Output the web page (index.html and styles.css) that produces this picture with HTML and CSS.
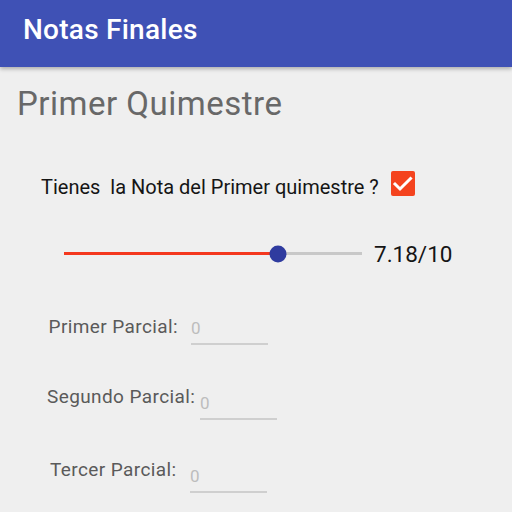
FILE: index.html
```html
<!DOCTYPE html>
<html lang="es">
<head>
<meta charset="utf-8">
<title>Notas Finales</title>
<link rel="stylesheet" href="styles.css">
</head>
<body>
<header class="appbar">
  <h1 class="appbar-title">Notas Finales</h1>
</header>
<main class="content">
  <h2 class="section-title">Primer Quimestre</h2>
  <div class="question-row">
    <span class="question-text">Tienes&nbsp; la Nota del Primer quimestre ?</span>
    <span class="checkbox">
      <svg width="24" height="25" viewBox="0 0 24 25"><polyline points="4,13 9,18 19.5,7.5" fill="none" stroke="#fff" stroke-width="3" stroke-linecap="square" stroke-linejoin="miter"/></svg>
    </span>
  </div>
  <div class="slider-row">
    <div class="slider">
      <div class="slider-fill" style="width: 71.8%"></div>
      <div class="slider-thumb" style="left: 71.8%"></div>
    </div>
    <span class="slider-value">7.18/10</span>
  </div>
  <div class="field-row field-row-1">
    <span class="field-label label-1">Primer Parcial:</span>
    <span class="field-input input-1">0</span>
  </div>
  <div class="field-row field-row-2">
    <span class="field-label label-2">Segundo Parcial:</span>
    <span class="field-input input-2">0</span>
  </div>
  <div class="field-row field-row-3">
    <span class="field-label label-3">Tercer Parcial:</span>
    <span class="field-input input-3">0</span>
  </div>
</main>
</body>
</html>
```
FILE: styles.css
```css
html, body {
  margin: 0;
  padding: 0;
}
body {
  width: 512px;
  height: 512px;
  overflow: hidden;
  background: #efefef;
  font-family: Roboto, "Noto Sans", "Liberation Sans", sans-serif;
}
.appbar {
  height: 67px;
  background: #3f51b5;
  box-shadow: 0 2px 4px rgba(0, 0, 0, 0.28);
  position: relative;
  z-index: 1;
  box-sizing: border-box;
  padding: 15.7px 0 0 23px;
}
.appbar-title {
  margin: 0;
  font-size: 28px;
  line-height: 28px;
  font-weight: 500;
  letter-spacing: 0.25px;
  color: #ffffff;
}
.content {
  display: flex;
  flex-direction: column;
}
.section-title {
  margin: 20.2px 0 0 17px;
  font-size: 33px;
  line-height: 33px;
  font-weight: 400;
  letter-spacing: 0.5px;
  color: #686868;
}
.question-row {
  display: flex;
  align-items: flex-start;
  margin-top: 50.8px;
  padding-left: 41px;
  height: 25px;
}
.question-text {
  padding-top: 6.2px;
  font-size: 20px;
  line-height: 20px;
  color: #151515;
  white-space: nowrap;
}
.checkbox {
  margin-left: 12px;
  width: 24px;
  height: 25px;
  border-radius: 2px;
  background: #f4431e;
  display: block;
}
.checkbox svg {
  display: block;
}
.slider-row {
  display: flex;
  align-items: center;
  margin-top: 47px;
  height: 22px;
  padding-left: 64px;
}
.slider {
  position: relative;
  width: 298px;
  height: 3px;
  background: #c8c8c8;
}
.slider-fill {
  height: 3px;
  background: #f4381e;
}
.slider-thumb {
  position: absolute;
  top: 1.5px;
  width: 17px;
  height: 17px;
  border-radius: 50%;
  background: #2f3b9f;
  transform: translate(-50%, -50%);
}
.slider-value {
  margin-left: 12px;
  font-size: 22.5px;
  line-height: 22px;
  color: #151515;
}
.field-row {
  display: flex;
  align-items: flex-start;
}
.field-row-1 { margin-top: 52px; }
.field-row-2 { margin-top: 42.5px; }
.field-row-3 { margin-top: 39.5px; }
.field-label {
  font-size: 19px;
  line-height: 19px;
  letter-spacing: 0.4px;
  color: #5a5a5a;
  white-space: nowrap;
  box-sizing: border-box;
}
.label-1 { padding-left: 48.5px; width: 191px; }
.label-2 { padding-left: 47px; width: 200px; }
.label-3 { padding-left: 50px; width: 190px; }
.field-input {
  display: block;
  width: 77px;
  font-size: 17px;
  line-height: 17px;
  color: #bdbdbd;
  padding-bottom: 6px;
  border-bottom: 2px solid #cfcfcf;
}
.input-1 { margin-top: 2.8px; }
.input-2 { margin-top: 7.8px; }
.input-3 { margin-top: 8.8px; }
```
